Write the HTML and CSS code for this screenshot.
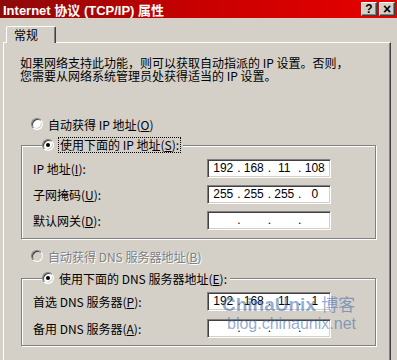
FILE: index.html
```html
<!DOCTYPE html>
<html>
<head>
    <meta charset="utf-8">
    <title>Internet 协议 (TCP/IP) 属性</title>
    <link rel="stylesheet" href="styles.css">
</head>
<body>
    <div class="titlebar">
        <span class="title">Internet 协议 (TCP/IP) 属性</span>
        <div class="caption-btns">
            <span class="cbtn">?</span>
            <span class="cbtn close">×</span>
        </div>
    </div>

    <div class="tabs">
        <div class="tab">常规</div>
    </div>

    <div class="panel">
        <p class="intro">如果网络支持此功能，则可以获取自动指派的 IP 设置。否则，<br>您需要从网络系统管理员处获得适当的 IP 设置。</p>

        <label class="option first"><span class="radio"></span><span>自动获得 IP 地址(<u>O</u>)</span></label>
        <fieldset class="group">
            <legend><label class="option"><span class="radio checked"></span><span class="focus">使用下面的 IP 地址(<u>S</u>):</span></label></legend>
            <div class="row">
                <span class="label">IP 地址(<u>I</u>):</span>
                <div class="ipbox"><span>192</span><i>.</i><span>168</span><i>.</i><span>11</span><i>.</i><span>108</span></div>
            </div>
            <div class="row">
                <span class="label">子网掩码(<u>U</u>):</span>
                <div class="ipbox"><span>255</span><i>.</i><span>255</span><i>.</i><span>255</span><i>.</i><span>0</span></div>
            </div>
            <div class="row">
                <span class="label">默认网关(<u>D</u>):</span>
                <div class="ipbox"><span></span><i>.</i><span></span><i>.</i><span></span><i>.</i><span></span></div>
            </div>
        </fieldset>

        <label class="option disabled second"><span class="radio"></span><span>自动获得 DNS 服务器地址(<u>B</u>)</span></label>
        <fieldset class="group dns">
            <legend><label class="option"><span class="radio checked"></span><span>使用下面的 DNS 服务器地址(<u>E</u>):</span></label></legend>
            <div class="row">
                <span class="label">首选 DNS 服务器(<u>P</u>):</span>
                <div class="ipbox"><span>192</span><i>.</i><span>168</span><i>.</i><span>11</span><i>.</i><span>1</span></div>
            </div>
            <div class="row">
                <span class="label">备用 DNS 服务器(<u>A</u>):</span>
                <div class="ipbox"><span></span><i>.</i><span></span><i>.</i><span></span><i>.</i><span></span></div>
            </div>
        </fieldset>
    </div>

    <div class="watermark">
        <div class="wm-brand">ChinaUnix <span>博客</span></div>
        <div class="wm-url">blog.chinaunix.net</div>
    </div>
</body>
</html>
```

FILE: styles.css
```css
body {
    margin: 0;
    width: 397px;
    height: 360px;
    overflow: hidden;
    position: relative;
    background: #d4d0c8;
    font-family: "Noto Sans CJK SC", "Liberation Sans", sans-serif;
    font-size: 12px;
    color: #000;
}

.titlebar {
    height: 18px;
    display: flex;
    align-items: center;
    justify-content: space-between;
    background: linear-gradient(to right, #8c0a0a, #c40000 45%, #e80000);
}
.title {
    color: #fff;
    font-family: "Liberation Sans", "Noto Sans CJK SC", sans-serif;
    font-weight: bold;
    font-size: 13px;
    padding-left: 3px;
    white-space: nowrap;
}
.caption-btns {
    display: flex;
    gap: 2px;
    padding-right: 2px;
}
.cbtn {
    width: 16px;
    height: 14px;
    box-sizing: border-box;
    background: #d4d0c8;
    border: 1px solid;
    border-color: #fff #404040 #404040 #fff;
    box-shadow: inset -1px -1px #808080;
    font-family: "Liberation Sans", sans-serif;
    font-weight: bold;
    font-size: 12px;
    line-height: 12px;
    text-align: center;
}
.cbtn.close { font-size: 14px; }

.tabs {
    display: flex;
    padding: 8px 0 0 6px;
}
.tab {
    position: relative;
    z-index: 1;
    width: 50px;
    height: 17px;
    margin-bottom: -1px;
    box-sizing: border-box;
    background: #d4d0c8;
    border: 1px solid;
    border-color: #fff #404040 transparent #fff;
    border-bottom: 0;
    border-radius: 2px 2px 0 0;
    box-shadow: inset -1px 0 #808080;
    padding-left: 7px;
    line-height: 16px;
}

.panel {
    margin-left: 3px;
    width: 388px;
    height: 330px;
    box-sizing: border-box;
    border-top: 1px solid #fff;
    border-left: 1px solid #fff;
    border-right: 1px solid #404040;
    box-shadow: inset -1px 0 #808080;
    padding: 0 0 0 16px;
}

.intro {
    margin: 13px 0 0;
    line-height: 13px;
    white-space: nowrap;
}

.option {
    display: flex;
    align-items: center;
    gap: 5px;
    height: 16px;
    white-space: nowrap;
}
.option.first {
    margin: 34px 0 0 11px;
}
.option.second {
    margin: 9px 0 0 11px;
}
.option.disabled {
    color: #808080;
    text-shadow: 1px 1px #fff;
}
.focus {
    outline: 1px dotted #000;
    outline-offset: 0;
    padding: 0 1px;
    line-height: 14px;
}

.radio {
    position: relative;
    width: 12px;
    height: 12px;
    flex: none;
    box-sizing: border-box;
    border-radius: 50%;
    background: #fff;
    border: 1px solid;
    border-color: #808080 #fff #fff #808080;
    box-shadow: inset 1px 1px #404040, inset -1px -1px #d4d0c8;
}
.disabled .radio {
    background: #d4d0c8;
}
.radio.checked::after {
    content: "";
    position: absolute;
    left: 3px;
    top: 3px;
    width: 4px;
    height: 4px;
    border-radius: 50%;
    background: #000;
}

.group {
    margin: 5px 0 0 1px;
    width: 355px;
    box-sizing: border-box;
    border: 1px solid #808080;
    box-shadow: inset 1px 1px #fff, 1px 1px #fff;
    padding: 6px 0 8px 11px;
    display: flex;
    flex-direction: column;
    gap: 7px;
}
.group.dns {
    margin-top: 6px;
    gap: 8px;
    padding-bottom: 7px;
}
.group legend {
    margin-left: 9px;
    padding: 0 3px 0 0;
    background: #d4d0c8;
}

.row {
    display: flex;
    align-items: center;
    height: 19px;
}
.label {
    width: 174px;
    white-space: nowrap;
}

.ipbox {
    width: 124px;
    height: 19px;
    box-sizing: border-box;
    background: #fff;
    border: 1px solid;
    border-color: #808080 #fff #fff #808080;
    box-shadow: inset 1px 1px #404040, inset -1px -1px #d4d0c8;
    display: flex;
    padding: 0 2px;
    font-family: "Liberation Sans", sans-serif;
    font-size: 12px;
    line-height: 17px;
}
.ipbox span {
    width: 27px;
    text-align: center;
}
.ipbox i {
    width: 4px;
    font-style: normal;
    text-align: right;
}

.watermark {
    position: absolute;
    left: 222px;
    top: 292px;
    color: rgba(60, 100, 170, 0.55);
    font-family: "Liberation Sans", sans-serif;
    pointer-events: none;
}
.wm-brand {
    font-size: 19px;
    font-weight: bold;
    line-height: 24px;
    white-space: nowrap;
}
.wm-brand span {
    font-family: "Noto Sans CJK SC", sans-serif;
    font-weight: normal;
    font-size: 17px;
}
.wm-url {
    margin: -3px 0 0 5px;
    font-size: 16px;
    line-height: 20px;
    white-space: nowrap;
}
```
